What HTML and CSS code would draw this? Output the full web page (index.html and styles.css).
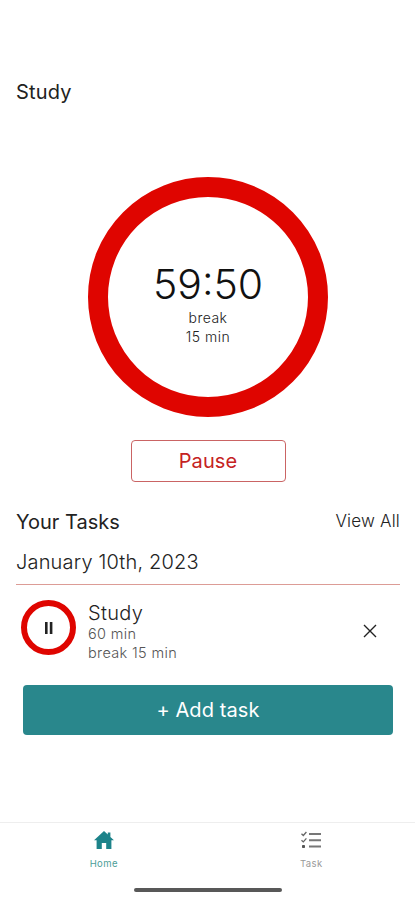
FILE: index.html
```html
<!DOCTYPE html>
<html lang="en">
<head>
    <meta charset="UTF-8">
    <meta name="viewport" content="width=device-width, initial-scale=1.0">
    <title>Study Timer</title>
    <link rel="stylesheet" href="styles.css">
</head>
<body>
    <div class="app">
        <main class="content">
            <h1 class="title">Study</h1>

            <div class="timer">
                <div class="time">59:50</div>
                <div class="break">break<br>15 min</div>
            </div>
            <button class="pause-btn" type="button">Pause</button>

            <div class="tasks-header">
                <h2>Your Tasks</h2>
                <a href="#" class="view-all">View All</a>
            </div>
            <div class="date">January 10th, 2023</div>

            <div class="task">
                <button class="task-status" type="button" aria-label="Pause task">
                    <svg width="10" height="12" viewBox="0 0 10 12">
                        <path d="M1 0h2.6v12H1zM5.8 0h2.6v12H5.8z" fill="#222"/>
                    </svg>
                </button>
                <div class="task-info">
                    <div class="task-name">Study</div>
                    <div class="task-detail">60 min</div>
                    <div class="task-detail">break 15 min</div>
                </div>
                <button class="task-remove" type="button" aria-label="Remove task">
                    <svg width="14" height="14" viewBox="0 0 14 14">
                        <path d="M1 1l12 12M13 1L1 13" stroke="#222" stroke-width="1.4" fill="none"/>
                    </svg>
                </button>
            </div>

            <button class="add-btn" type="button">+ Add task</button>
        </main>

        <nav class="tabs">
            <a href="#" class="tab active">
                <svg width="20" height="18" viewBox="0 0 20 18">
                    <path d="M10 0l3.8 3.5V1.6h2.6v4.3L20 9.2h-2.6V18h-5.2v-6H7.8v6H2.6V9.2H0z" fill="#1d838a"/>
                </svg>
                <span>Home</span>
            </a>
            <a href="#" class="tab">
                <svg width="20" height="18" viewBox="0 0 20 18">
                    <path d="M.5 2.8l1.8 1.7L5.4 1M.5 9.2l1.8 1.7L5.4 7.4" stroke="#666" stroke-width="1.3" fill="none"/>
                    <rect x="1" y="14" width="3" height="3" rx=".8" fill="#555"/>
                    <path d="M8 3h12M8 9.3h12M8 15.6h12" stroke="#777" stroke-width="2" fill="none"/>
                </svg>
                <span>Task</span>
            </a>
        </nav>
        <div class="home-bar"></div>
    </div>
</body>
</html>
```

FILE: styles.css
```css
* {
    box-sizing: border-box;
}
body {
    margin: 0;
    font-family: Inter, sans-serif;
    color: #222;
    background: #fff;
}
h1, h2 {
    margin: 0;
    font-weight: 400;
}
a {
    color: inherit;
    text-decoration: none;
}
button {
    font-family: inherit;
    padding: 0;
    border: none;
    background: none;
}
svg {
    display: block;
}
.app {
    display: flex;
    flex-direction: column;
    height: 900px;
    overflow: hidden;
}
.content {
    display: flex;
    flex-direction: column;
    flex: 1;
    padding: 80px 15px 0 16px;
}
.title {
    font-size: 20px;
    line-height: 24px;
    letter-spacing: 0.2px;
}
.timer {
    display: flex;
    flex-direction: column;
    align-items: center;
    align-self: center;
    width: 240px;
    height: 240px;
    margin-top: 73px;
    padding-top: 63px;
    border: 20px solid #df0500;
    border-radius: 50%;
}
.time {
    font-size: 41px;
    font-weight: 300;
    line-height: 48px;
    color: #111;
}
.break {
    margin-top: 1px;
    font-size: 14px;
    font-weight: 300;
    line-height: 18.5px;
    letter-spacing: 0.5px;
    text-align: center;
}
.pause-btn {
    align-self: center;
    width: 155px;
    height: 42px;
    margin-top: 23px;
    border: 1px solid #ca6464;
    border-radius: 4px;
    font-size: 20px;
    letter-spacing: 0.1px;
    color: #c52222;
}
.tasks-header {
    display: flex;
    justify-content: space-between;
    margin-top: 28px;
}
.tasks-header h2 {
    font-size: 20px;
    line-height: 24px;
}
.view-all {
    font-size: 17px;
    font-weight: 300;
    line-height: 22px;
    letter-spacing: 0.2px;
}
.date {
    height: 51px;
    padding-top: 16px;
    border-bottom: 1px solid #dc9c96;
    font-size: 20px;
    font-weight: 300;
    line-height: 24px;
    letter-spacing: 0.17px;
}
.task {
    display: flex;
    align-items: center;
    height: 85px;
    padding: 0 23px 0 5px;
}
.task-status {
    display: flex;
    align-items: center;
    justify-content: center;
    width: 55px;
    height: 55px;
    border: 6px solid #df0500;
    border-radius: 50%;
}
.task-info {
    flex: 1;
    margin: 8px 0 0 12px;
}
.task-name {
    font-size: 20px;
    line-height: 24px;
    font-weight: 300;
    letter-spacing: 0.3px;
}
.task-detail {
    font-size: 14.5px;
    font-weight: 300;
    line-height: 18.5px;
    letter-spacing: 0.35px;
    color: #555;
}
.task-remove {
    margin-top: 6px;
}
.add-btn {
    height: 50px;
    margin: 15px 7px 0;
    border-radius: 4px;
    font-size: 20px;
    letter-spacing: 0.1px;
    color: #fff;
    background: #29878c;
}
.tabs {
    display: flex;
    height: 66px;
    border-top: 1px solid #eee;
}
.tab {
    display: flex;
    flex: 1;
    flex-direction: column;
    align-items: center;
    padding-top: 8px;
    font-size: 9.5px;
    line-height: 12px;
    letter-spacing: 0.4px;
    color: #999;
}
.tab span {
    margin-top: 9px;
}
.tab.active {
    color: #4b9e98;
}
.home-bar {
    width: 148px;
    height: 4px;
    margin: 0 auto 8px;
    border-radius: 2px;
    background: #585858;
}
```
